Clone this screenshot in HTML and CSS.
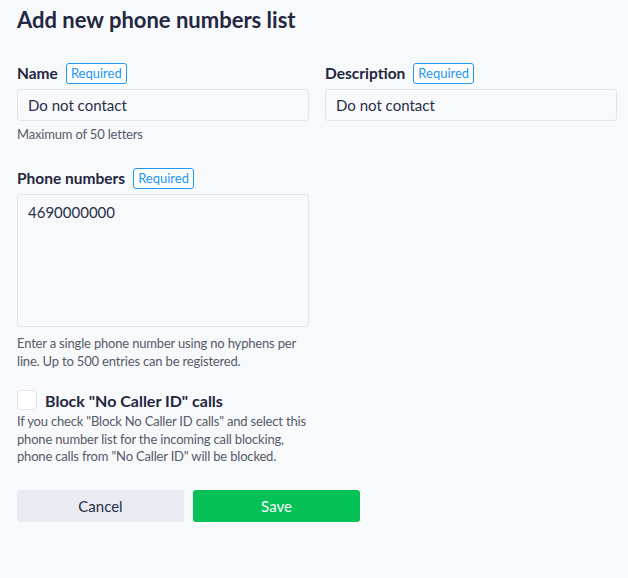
FILE: index.html
```html
<!DOCTYPE html>
<html>
<head>
<meta charset="utf-8">
<link rel="stylesheet" href="styles.css">
</head>
<body>
<div class="page">
  <h1 class="title">Add new phone numbers list</h1>
  <div class="row">
    <div class="field">
      <div class="label-row"><span class="label">Name</span><span class="badge">Required</span></div>
      <div class="input">Do not contact</div>
      <div class="help">Maximum of 50 letters</div>
    </div>
    <div class="field">
      <div class="label-row"><span class="label">Description</span><span class="badge">Required</span></div>
      <div class="input">Do not contact</div>
    </div>
  </div>
  <div class="field phones">
    <div class="label-row"><span class="label">Phone numbers</span><span class="badge">Required</span></div>
    <div class="textarea">4690000000</div>
    <div class="help">Enter a single phone number using no hyphens per line. Up to 500 entries can be registered.</div>
  </div>
  <div class="check-block">
    <div class="check-row"><span class="checkbox"></span><span class="check-label">Block "No Caller ID" calls</span></div>
    <div class="help">If you check "Block No Caller ID calls" and select this phone number list for the incoming call blocking, phone calls from "No Caller ID" will be blocked.</div>
  </div>
  <div class="buttons">
    <button class="btn cancel">Cancel</button>
    <button class="btn save">Save</button>
  </div>
</div>
</body>
</html>
```
FILE: styles.css
```css
html, body { margin: 0; padding: 0; background: #f8f9fb; }
body { font-family: Lato, "Noto Sans", sans-serif; color: #2a2e48; }
.page { padding: 6px 11px 0 17px; }
.title { margin: 0; font-size: 22px; font-weight: 700; line-height: 28px; color: #232741; }
.row { display: grid; grid-template-columns: 292px 292px; column-gap: 16px; margin-top: 28px; }
.field { width: 292px; }
.label-row { display: flex; align-items: center; height: 22px; margin-bottom: 5px; }
.label { font-size: 15.5px; font-weight: 700; color: #232741; }
.badge { margin-left: 8px; font-size: 13px; color: #2196f3; border: 1px solid #2196f3; border-radius: 3px; padding: 0 4px; line-height: 19px; background: #fff; }
.input { box-sizing: border-box; height: 32px; border: 1px solid #e3e5ea; border-radius: 3px; background: #f8f9fb; font-size: 15px; padding: 0 10px; line-height: 30px; color: #2a2e48; }
.help { font-size: 13px; line-height: 18px; color: #55596a; margin-top: 4px; letter-spacing: -0.18px; }
.phones { margin-top: 24px; }
.phones .help { margin-top: 7px; }
.textarea { box-sizing: border-box; height: 133px; border: 1px solid #e3e5ea; border-radius: 3px; font-size: 15px; padding: 7px 10px; line-height: 20px; }
.check-block { width: 292px; margin-top: 20px; }
.check-row { display: flex; align-items: center; height: 20px; }
.checkbox { box-sizing: border-box; width: 20px; height: 20px; border: 1px solid #e3e5ea; border-radius: 3px; background: #fff; margin-right: 8px; }
.check-label { font-size: 16px; font-weight: 700; color: #232741; }
.check-block .help { margin-top: 3px; line-height: 17.5px; }
.buttons { display: flex; gap: 9px; margin-top: 24px; }
.btn { width: 167px; height: 32px; border: none; border-radius: 3px; font-family: Lato, "Noto Sans", sans-serif; font-size: 15px; cursor: pointer; }
.cancel { background: #e8ebf1; color: #2a2e48; }
.save { background: #06c155; color: #fff; }
```
